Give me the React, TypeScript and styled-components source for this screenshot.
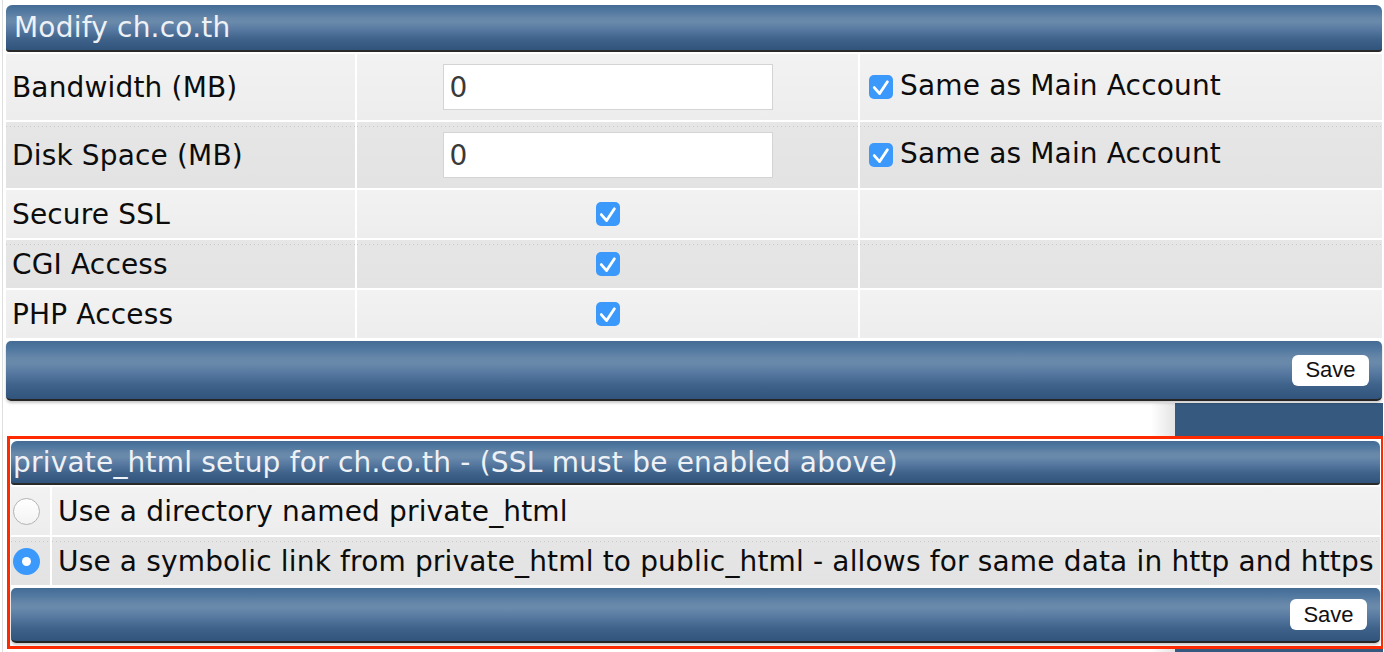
import React from 'react';
import styled, { createGlobalStyle } from 'styled-components';

const GlobalStyle = createGlobalStyle`
  html, body { margin: 0; padding: 0; background: #fff; }
  body { font-family: "DejaVu Sans", Verdana, sans-serif; }
  #root { width: 1384px; height: 652px; }
`;

const barGradient = `linear-gradient(to bottom, #446b94 0%, #5178a0 14%, #6888a9 30%, #6a8aab 38%, #5678a0 56%, #3e6289 76%, #30547b 100%)`;

const Page = styled.div`
  width: 1381px;
  height: 652px;
  margin-left: 2px;
  border-left: 1px solid #dedede;
  padding: 5px 0 0 3px;
  box-sizing: border-box;
  overflow: hidden;
  background: #fff;
`;

const Panel = styled.div<{ $width: number }>`
  width: ${(p) => p.$width}px;
  display: flex;
  flex-direction: column;
  gap: 2px;
`;

const SectionHeader = styled.div<{ $pad: number; $h: number }>`
  height: ${(p) => p.$h}px;
  box-sizing: border-box;
  display: flex;
  align-items: center;
  padding-left: ${(p) => p.$pad}px;
  background: ${barGradient};
  border-bottom: 2px solid #2a2a2a;
  border-radius: 6px 6px 3px 3px;
  color: #eef1f5;
  font-size: 28px;
  letter-spacing: 0.2px;
  white-space: nowrap;
`;

const Row = styled.div<{ $cols: string; $h: number }>`
  display: grid;
  grid-template-columns: ${(p) => p.$cols};
  gap: 2px;
  height: ${(p) => p.$h}px;
`;

const Cell = styled.div<{ $dark?: boolean; $align?: 'start' | 'center'; $pad?: number }>`
  display: flex;
  align-items: center;
  justify-content: ${(p) => (p.$align === 'center' ? 'center' : 'flex-start')};
  padding-left: ${(p) => p.$pad ?? 0}px;
  gap: 7px;
  box-sizing: border-box;
  min-width: 0;
  font-size: 28px;
  letter-spacing: 0.16px;
  color: #0c0c0c;
  white-space: nowrap;
  overflow: hidden;
  background-color: ${(p) => (p.$dark ? '#e5e5e5' : '#f0f0f0')};
  background-image: ${(p) =>
    p.$dark
      ? 'repeating-linear-gradient(to right, #c9c9c9 0 1px, transparent 1px 4px), linear-gradient(to bottom, #e6e6e6, #e3e3e3)'
      : 'linear-gradient(to bottom, #f2f2f2, #ededed)'};
  background-size: ${(p) => (p.$dark ? '100% 1px, 100% 100%' : '100% 100%')};
  background-position: ${(p) => (p.$dark ? '0 4px, 0 0' : '0 0')};
  background-repeat: no-repeat;
`;

const SideText = styled.span`
  margin-top: -4px;
`;

const TextInput = styled.input`
  width: 330px;
  height: 46px;
  box-sizing: border-box;
  border: 1px solid #d4d4d4;
  background: #fff;
  padding: 0 6px;
  font-family: "DejaVu Sans", Verdana, sans-serif;
  font-size: 28px;
  color: #3a3a3a;
  outline: none;
`;

const FooterBar = styled.div<{ $h: number; $mt: number }>`
  height: ${(p) => p.$h}px;
  margin-top: ${(p) => p.$mt}px;
  box-sizing: border-box;
  display: flex;
  justify-content: flex-end;
  align-items: center;
  padding-right: 13px;
  background: ${barGradient};
  border-bottom: 2px solid #262626;
  border-radius: 5px;
  box-shadow: 0 2px 3px rgba(0, 0, 0, 0.22);
`;

const SaveButton = styled.button`
  width: 77px;
  height: 31px;
  border: none;
  border-radius: 6px;
  background: #fff;
  font-family: "Liberation Sans", Arial, sans-serif;
  font-size: 22px;
  color: #111;
  padding: 0;
  cursor: pointer;
`;

const LowerArea = styled.div`
  width: 1377px;
  height: 250px;
  margin-top: 2px;
  padding-top: 33px;
  box-sizing: border-box;
  background: linear-gradient(
    to right,
    #fff 0,
    #fff calc(100% - 232px),
    #e4e4e4 calc(100% - 208px),
    #36597f calc(100% - 208px),
    #36597f 100%
  );
`;

const Highlight = styled.div`
  width: 1377px;
  margin-left: 1px;
  border: 3px solid #ff2a00;
  box-sizing: border-box;
  padding: 2px 0 3px 1px;
  background: #fff;
`;

const Radio = styled.span<{ $checked?: boolean }>`
  position: relative;
  width: 27px;
  height: 27px;
  border-radius: 50%;
  box-sizing: border-box;
  border: ${(p) => (p.$checked ? 'none' : '1px solid #b4b4b4')};
  background: ${(p) => (p.$checked ? '#3b99fc' : 'linear-gradient(to bottom, #fff, #f3f3f3)')};
  &::after {
    content: '';
    display: ${(p) => (p.$checked ? 'block' : 'none')};
    position: absolute;
    left: 50%;
    top: 50%;
    width: 9px;
    height: 9px;
    margin: -4.5px 0 0 -4.5px;
    border-radius: 50%;
    background: #fff;
  }
`;

const CheckBox: React.FC = () => (
  <svg width="24" height="24" viewBox="0 0 24 24" style={{ flex: 'none' }}>
    <rect x="0" y="0" width="24" height="24" rx="5" fill="#3b99fc" />
    <path
      d="M5.3 12.6 L10.6 18.6 L18.4 6.8"
      stroke="#fff"
      strokeWidth="2.8"
      fill="none"
      strokeLinecap="round"
      strokeLinejoin="round"
    />
  </svg>
);

const COLS = '349px 501px 1fr';

export default function App() {
  return (
    <>
      <GlobalStyle />
      <Page>
        <Panel $width={1376}>
          <SectionHeader $pad={8} $h={47}>Modify ch.co.th</SectionHeader>
          <Row $cols={COLS} $h={66}>
            <Cell $pad={6}>Bandwidth (MB)</Cell>
            <Cell $align="center">
              <TextInput defaultValue="0" />
            </Cell>
            <Cell $pad={9}>
              <CheckBox />
              <SideText>Same as Main Account</SideText>
            </Cell>
          </Row>
          <Row $cols={COLS} $h={66}>
            <Cell $dark $pad={6}>Disk Space (MB)</Cell>
            <Cell $dark $align="center">
              <TextInput defaultValue="0" />
            </Cell>
            <Cell $dark $pad={9}>
              <CheckBox />
              <SideText>Same as Main Account</SideText>
            </Cell>
          </Row>
          <Row $cols={COLS} $h={48}>
            <Cell $pad={6}>Secure SSL</Cell>
            <Cell $align="center">
              <CheckBox />
            </Cell>
            <Cell />
          </Row>
          <Row $cols={COLS} $h={48}>
            <Cell $dark $pad={6}>CGI Access</Cell>
            <Cell $dark $align="center">
              <CheckBox />
            </Cell>
            <Cell $dark />
          </Row>
          <Row $cols={COLS} $h={48}>
            <Cell $pad={6}>PHP Access</Cell>
            <Cell $align="center">
              <CheckBox />
            </Cell>
            <Cell />
          </Row>
          <FooterBar $h={60} $mt={1}>
            <SaveButton>Save</SaveButton>
          </FooterBar>
        </Panel>

        <LowerArea>
          <Highlight>
            <Panel $width={1369}>
              <SectionHeader $pad={2} $h={44}>
                private_html setup for ch.co.th - (SSL must be enabled above)
              </SectionHeader>
              <Row $cols="39px 1fr" $h={48}>
                <Cell $pad={2}>
                  <Radio />
                </Cell>
                <Cell $pad={6}>Use a directory named private_html</Cell>
              </Row>
              <Row $cols="39px 1fr" $h={48}>
                <Cell $dark $pad={2}>
                  <Radio $checked />
                </Cell>
                <Cell $dark $pad={6}>
                  Use a symbolic link from private_html to public_html - allows for same data in http and https
                </Cell>
              </Row>
              <FooterBar $h={55} $mt={1}>
                <SaveButton>Save</SaveButton>
              </FooterBar>
            </Panel>
          </Highlight>
        </LowerArea>
      </Page>
    </>
  );
}
